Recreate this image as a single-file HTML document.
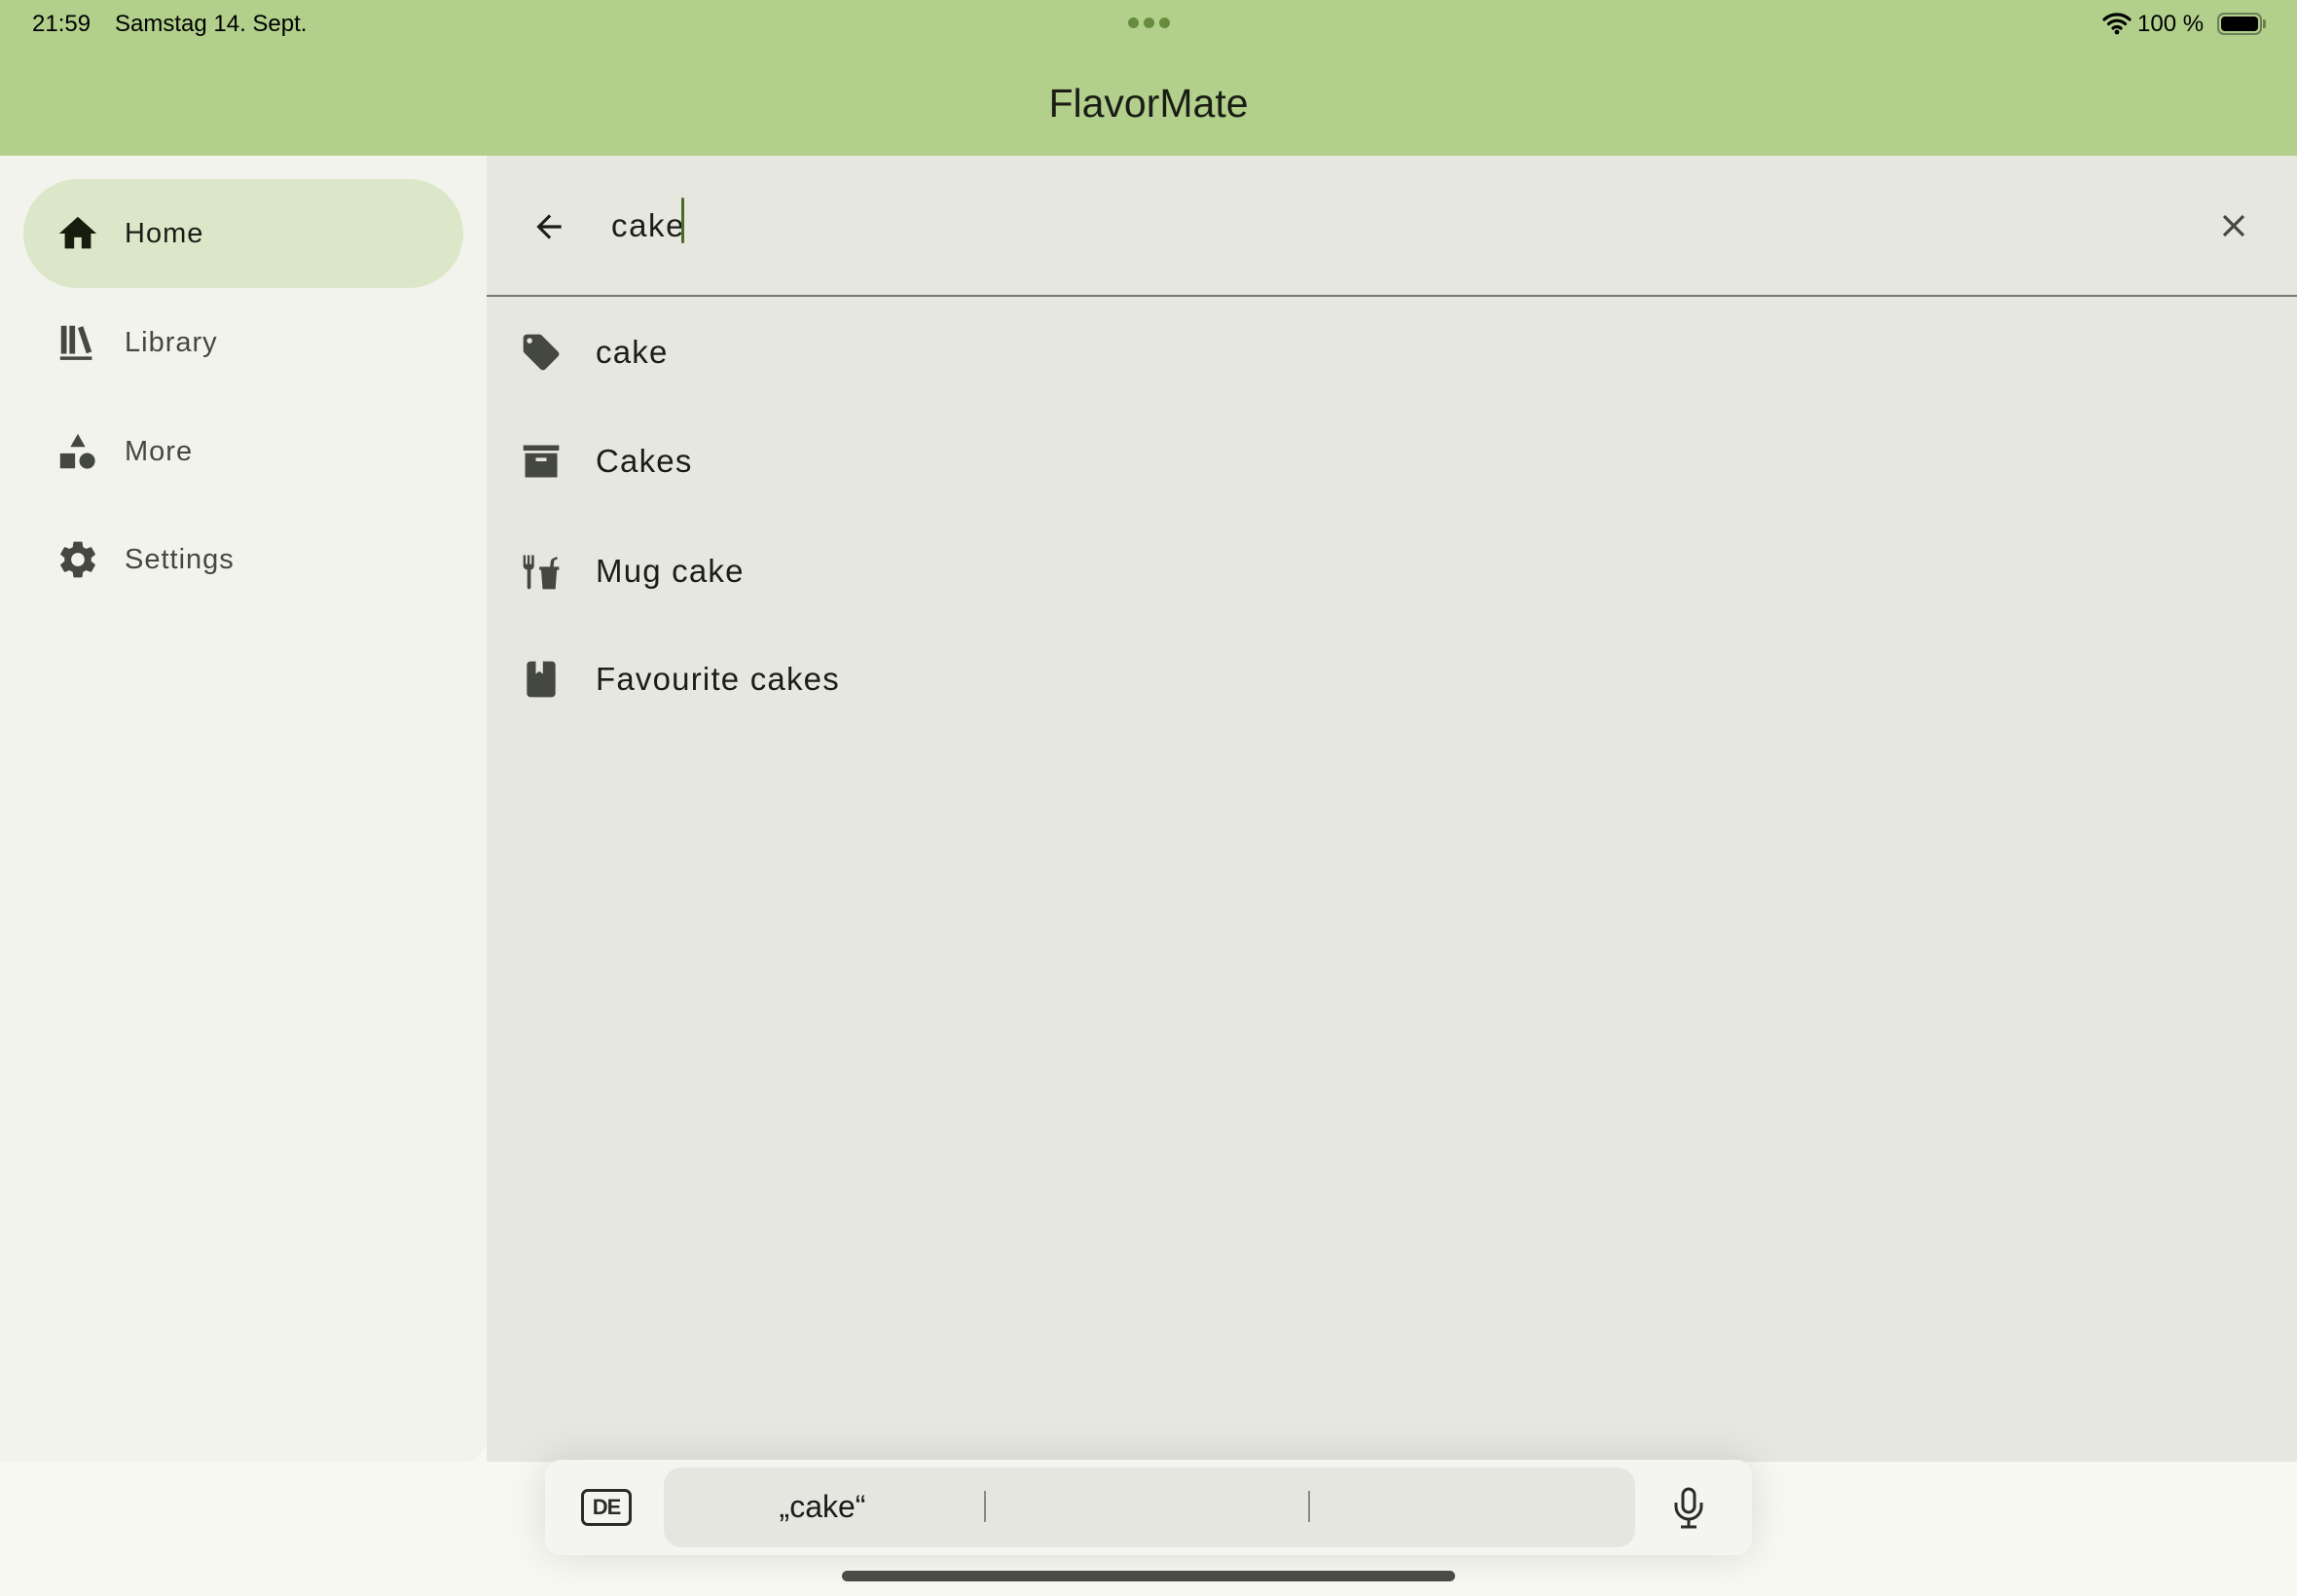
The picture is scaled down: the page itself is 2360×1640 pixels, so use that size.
<!DOCTYPE html>
<html><head><meta charset="utf-8">
<style>
*{margin:0;padding:0;box-sizing:border-box}
html,body{width:2360px;height:1640px;overflow:hidden;background:#f7f8f1;font-family:"Liberation Sans",sans-serif}
.abs{position:absolute}
#hdr{left:0;top:0;width:2360px;height:160px;background:#b2d08b}
.st{top:10px;font-size:24px;color:#000;line-height:30px}
#title{left:0;width:2360px;top:79px;text-align:center;font-size:41px;color:#1a1c16;line-height:54px}
.dot{width:11px;height:11px;border-radius:50%;background:#668d3e;top:18px}
#side{left:0;top:160px;width:500px;height:1342px;background:#f2f3ec;border-radius:0 0 24px 0}
#main{left:500px;top:160px;width:1860px;height:1342px;background:#e6e7df}
#pill{left:24px;top:184px;width:452px;height:112px;border-radius:56px;background:#dce7c9}
.nav{left:128px;font-size:29px;color:#45483e;line-height:40px;letter-spacing:1px}
.ni{left:57px;width:46px;height:46px}
.it{left:612px;font-size:33px;color:#1c1d18;letter-spacing:1.2px;line-height:40px}
.ii{left:534px;width:44px;height:44px}
#div{left:500px;top:303px;width:1860px;height:2px;background:#777a6c}
#kb{left:560px;top:1500px;width:1240px;height:98px;background:#f4f5f0;border-radius:16px;box-shadow:0 0 40px rgba(0,0,0,0.12)}
#kbin{left:682px;top:1508px;width:998px;height:82px;background:#e5e6e0;border-radius:18px}
</style></head><body>
<div id="hdr" class="abs"></div>
<div class="abs st" style="left:33px">21:59</div>
<div class="abs st" style="left:118px">Samstag 14. Sept.</div>
<div class="abs dot" style="left:1159px"></div>
<div class="abs dot" style="left:1175px"></div>
<div class="abs dot" style="left:1191px"></div>
<svg class="abs" style="left:2160px;top:12px" width="30" height="24" viewBox="0 0 30 24"><path d="M2 8a19 19 0 0 1 26 0M6.5 12.5a12.5 12.5 0 0 1 17 0M11 17a6 6 0 0 1 8 0" stroke="#000" stroke-width="3.2" fill="none" stroke-linecap="round"/><circle cx="15" cy="21" r="2.4"/></svg>
<div class="abs st" style="left:2196px">100 %</div>
<div class="abs" style="left:2278px;top:13px;width:46px;height:23px;border:2px solid #6a7f55;border-radius:7px;padding:2px"><div style="width:100%;height:100%;background:#000;border-radius:4px"></div></div>
<div class="abs" style="left:2325px;top:20px;width:3px;height:9px;background:#6a7f55;border-radius:0 2px 2px 0"></div>
<div id="title" class="abs">FlavorMate</div>

<div id="side" class="abs"></div>
<div id="main" class="abs"></div>
<div id="pill" class="abs"></div>

<svg class="abs ni" style="top:217px" viewBox="0 0 24 24"><path d="M10 20v-6h4v6h5v-8h3L12 3 2 12h3v8z" fill="#161d0c"/></svg>
<div class="abs nav" style="top:220px;color:#1a1c16">Home</div>
<svg class="abs ni" style="top:329px" viewBox="0 0 24 24"><path d="M3 3h3v15H3zM7.5 3h3v15h-3zM12 4.2l2.8-1 4.6 13.7-2.8 1zM2.5 19.5h17v1.8h-17z" fill="#45483e"/></svg>
<div class="abs nav" style="top:332px">Library</div>
<svg class="abs ni" style="top:441px" viewBox="0 0 24 24"><path d="M12 2.5l4 7H8z M2.5 13h8v8h-8z" fill="#45483e"/><circle cx="17" cy="17" r="4.2" fill="#45483e"/></svg>
<div class="abs nav" style="top:444px">More</div>
<svg class="abs ni" style="top:552px" viewBox="0 0 24 24"><path fill="#45483e" d="M19.14 12.94c.04-.3.06-.61.06-.94 0-.32-.02-.64-.07-.94l2.03-1.58a.49.49 0 0 0 .12-.61l-1.92-3.320a.49.49 0 0 0-.59-.22l-2.39.96c-.5-.38-1.030-.7-1.62-.94l-.36-2.54a.48.48 0 0 0-.48-.41h-3.84c-.24 0-.43.17-.47.41l-.36 2.54c-.59.24-1.13.57-1.62.94l-2.39-.96c-.22-.08-.47 0-.59.22L2.74 8.87c-.12.21-.08.47.12.61l2.03 1.58c-.05.3-.09.63-.09.94s.02.64.07.94l-2.03 1.58a.49.49 0 0 0-.12.61l1.92 3.32c.12.22.37.29.59.22l2.39-.96c.5.38 1.03.7 1.62.94l.36 2.54c.05.24.24.41.48.41h3.84c.24 0 .44-.17.47-.41l.36-2.54c.59-.24 1.13-.56 1.62-.94l2.39.96c.22.08.47 0 .59-.22l1.92-3.32c.12-.22.07-.47-.12-.61l-2.010-1.58zM12 15.6c-1.98 0-3.6-1.62-3.6-3.6s1.62-3.6 3.6-3.6 3.6 1.62 3.6 3.6-1.62 3.6-3.6 3.6z"/></svg>
<div class="abs nav" style="top:555px">Settings</div>

<svg class="abs" style="left:545px;top:214px" width="38" height="38" viewBox="0 0 24 24"><path d="M20 11H7.8l5.6-5.6L12 4l-8 8 8 8 1.4-1.4L7.8 13H20z" fill="#1c1d18"/></svg>
<div class="abs" style="left:628px;top:212px;font-size:33px;color:#1c1d18;letter-spacing:1.6px;line-height:40px">cake</div>
<div class="abs" style="left:700px;top:203px;width:3px;height:47px;background:#4b6b2a;border-radius:2px"></div>
<svg class="abs" style="left:2276px;top:213px" width="38" height="38" viewBox="0 0 24 24"><path d="M19 6.4L17.6 5 12 10.6 6.4 5 5 6.4 10.6 12 5 17.6 6.4 19 12 13.4 17.6 19 19 17.6 13.4 12z" fill="#45483e"/></svg>
<div id="div" class="abs"></div>

<svg class="abs ii" style="top:340px" viewBox="0 0 24 24"><path fill="#45483e" d="M21.4 11.6l-9-9C12.05 2.25 11.55 2 11 2H4c-1.1 0-2 .9-2 2v7c0 .55.22 1.05.59 1.42l9 9c.36.36.86.58 1.41.58s1.05-.22 1.41-.59l7-7c.37-.36.59-.86.59-1.41s-.23-1.06-.6-1.4zM5.5 7C4.67 7 4 6.33 4 5.5S4.67 4 5.5 4 7 4.67 7 5.5 6.33 7 5.5 7z"/></svg>
<div class="abs it" style="top:342px">cake</div>
<svg class="abs ii" style="top:452px" viewBox="0 0 24 24"><path fill="#45483e" d="M2 3h20v3H2zM3 7.5h18V21H3zM9 10v2h6v-2z" fill-rule="evenodd"/></svg>
<div class="abs it" style="top:454px">Cakes</div>
<svg class="abs ii" style="top:565px" viewBox="0 0 24 24"><path fill="#45483e" d="M2 3h1.3v5h1V3h1.3v5h1V3H8v6c0 1.2-.8 2-1.8 2.2V21c0 .6-.5 1-1 1s-1-.4-1-1V11.2C3 11 2 10.2 2 9zM11 9.5h11v1.8h-1.2L20 22h-7.2l-.8-10.7H11zM17 9.5l.4-3.2c.1-.7.6-1.2 1.3-1.5l2-1 .6 1.2-2 1-.4 3.5z"/></svg>
<div class="abs it" style="top:567px">Mug cake</div>
<svg class="abs ii" style="top:676px" viewBox="0 0 24 24"><path fill="#45483e" d="M6 2h12c1.1 0 2 .9 2 2v16c0 1.1-.9 2-2 2H6c-1.1 0-2-.9-2-2V4c0-1.1.9-2 2-2zm3 0v7l2-1.5L13 9V2z" fill-rule="evenodd"/></svg>
<div class="abs it" style="top:678px">Favourite cakes</div>

<div id="kb" class="abs"></div>
<div id="kbin" class="abs"></div>
<div class="abs" style="left:597px;top:1530px;width:52px;height:38px;border:3px solid #2b2b2b;border-radius:7px;font-size:22px;font-weight:bold;color:#2b2b2b;text-align:center;line-height:32px;letter-spacing:-1px">DE</div>
<div class="abs" style="left:775px;top:1528px;width:140px;text-align:center;font-size:32px;color:#1a1a1a;line-height:40px">„cake“</div>
<div class="abs" style="left:1011px;top:1532px;width:2px;height:32px;background:#8a8a86"></div>
<div class="abs" style="left:1344px;top:1532px;width:2px;height:32px;background:#8a8a86"></div>
<svg class="abs" style="left:1718px;top:1528px" width="34" height="44" viewBox="0 0 34 44"><rect x="11" y="2" width="12" height="24" rx="6" fill="none" stroke="#2b2b2b" stroke-width="3"/><path d="M4 16v4a13 13 0 0 0 26 0v-4M17 33v7M9 41h16" fill="none" stroke="#2b2b2b" stroke-width="3"/></svg>
<div class="abs" style="left:865px;top:1614px;width:630px;height:11px;border-radius:6px;background:#4a4c48"></div>
</body></html>
